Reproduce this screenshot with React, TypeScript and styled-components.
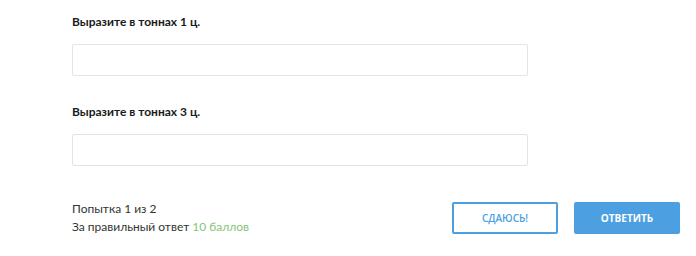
import styled, { createGlobalStyle } from "styled-components";

const GlobalStyle = createGlobalStyle`
  html, body {
    margin: 0;
    padding: 0;
    background: #ffffff;
    font-family: Lato, "Open Sans", "Liberation Sans", sans-serif;
    color: #222;
  }
`;

const Page = styled.div`
  width: 696px;
  height: 256px;
  padding: 14px 16px 0 72px;
  box-sizing: border-box;
  display: flex;
  flex-direction: column;
`;

const Question = styled.div`
  width: 456px;
  display: flex;
  flex-direction: column;
  gap: 14px;
  margin-bottom: 28px;
`;

const Label = styled.div`
  font-size: 12px;
  font-weight: 700;
  line-height: 16px;
  color: #1a1a1a;
`;

const Input = styled.input`
  height: 32px;
  box-sizing: border-box;
  border: 1px solid #e3e3e3;
  border-radius: 2px;
  background: #fff;
  outline: none;
  font: inherit;
  padding: 0 10px;
`;

const Footer = styled.div`
  display: flex;
  align-items: center;
  justify-content: space-between;
  margin-top: 6px;
`;

const Info = styled.div`
  font-size: 12px;
  line-height: 18px;
  color: #333;
`;

const Points = styled.span`
  color: #86c47a;
`;

const Actions = styled.div`
  display: flex;
  gap: 16px;
`;

const Button = styled.button<{ $primary?: boolean }>`
  width: 106px;
  height: 32px;
  box-sizing: border-box;
  border-radius: 2px;
  border: 2px solid #4c9fe1;
  background: ${(p) => (p.$primary ? "#4c9fe1" : "#fff")};
  color: ${(p) => (p.$primary ? "#fff" : "#4c9fe1")};
  font-family: "Open Sans", "Liberation Sans", sans-serif;
  font-size: 10px;
  font-weight: ${(p) => (p.$primary ? 700 : 600)};
  text-transform: uppercase;
  cursor: pointer;
`;

export default function App() {
  return (
    <Page>
      <GlobalStyle />
      <Question>
        <Label>Выразите в тоннах 1 ц.</Label>
        <Input />
      </Question>
      <Question>
        <Label>Выразите в тоннах 3 ц.</Label>
        <Input />
      </Question>
      <Footer>
        <Info>
          Попытка 1 из 2
          <br />
          За правильный ответ <Points>10 баллов</Points>
        </Info>
        <Actions>
          <Button>Сдаюсь!</Button>
          <Button $primary>Ответить</Button>
        </Actions>
      </Footer>
    </Page>
  );
}
